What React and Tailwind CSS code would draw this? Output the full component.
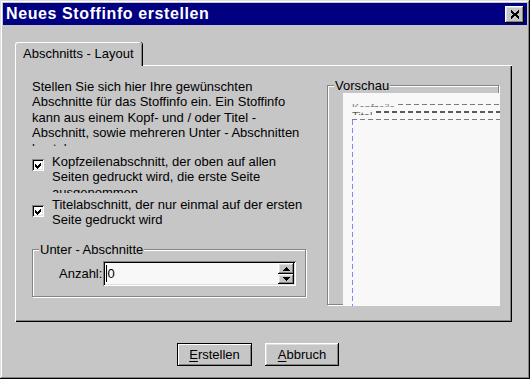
import React from "react";

const raised =
  "shadow-[inset_-1px_-1px_0_#000,inset_1px_1px_0_#fff,inset_-2px_-2px_0_#848484,inset_2px_2px_0_#dfdfdf]";
const sunken =
  "shadow-[inset_1px_1px_0_#848484,inset_-1px_-1px_0_#fff,inset_2px_2px_0_#000,inset_-2px_-2px_0_#dfdfdf]";
const etched = "border border-[#848484] shadow-[inset_1px_1px_0_#fff,1px_1px_0_#fff]";

function Checkbox({ className = "" }) {
  return (
    <div
      className={`flex h-[12px] w-[12px] shrink-0 items-center justify-center bg-white ${sunken} ${className}`}
    >
      <svg width="7" height="7" viewBox="0 0 7 7" shapeRendering="crispEdges">
        <polygon points="0,2 2,4 6,0 6,3 2,7 0,5" fill="#000" />
      </svg>
    </div>
  );
}

function Arrow({ up }) {
  return (
    <svg width="7" height="4" viewBox="0 0 7 4" shapeRendering="crispEdges">
      <polygon points={up ? "3.5,0 7,4 0,4" : "0,0 7,0 3.5,4"} fill="#000" />
    </svg>
  );
}

function GroupBox({ label, className, children }) {
  return (
    <div className={`relative ${etched} ${className}`}>
      <span className="absolute -top-[8px] left-[6px] bg-[#c6c6c6] px-[1px] leading-[15.4px]">
        {label}
      </span>
      {children}
    </div>
  );
}

export default function App() {
  return (
    <div className="font-['Liberation_Sans',Arial,sans-serif] text-[13px] text-black">
      <div className="flex h-[379px] w-[530px] flex-col bg-[#c6c6c6] p-[3px] shadow-[inset_-1px_-1px_0_#000,inset_1px_1px_0_#dfdfdf,inset_-2px_-2px_0_#848484,inset_2px_2px_0_#fff]">
        {/* title bar */}
        <div className="flex h-[22px] items-center justify-between bg-[#000080] pl-[3px] pr-[3px]">
          <span className="text-[16px] font-bold leading-none tracking-[0.6px] text-white">
            Neues Stoffinfo erstellen
          </span>
          <div className={`flex h-[17px] w-[19px] items-center justify-center bg-[#c6c6c6] ${raised}`}>
            <svg width="10" height="9" viewBox="0 0 10 9" shapeRendering="crispEdges">
              <path d="M1 1 L9 8 M9 1 L1 8" stroke="#000" strokeWidth="2" />
            </svg>
          </div>
        </div>

        <div className="px-[12px]">
          {/* tab */}
          <div className="relative z-10 -mb-[1px] mt-[17px] h-[24px] w-[127px] rounded-t-[3px] border-l border-t border-white bg-[#c6c6c6] pl-[7px] pt-[3px] leading-[15px] shadow-[inset_-1px_0_0_#848484,1px_0_0_#000]">
            Abschnitts - Layout
          </div>

          {/* panel */}
          <div className="flex h-[257px] w-[497px] bg-[#c6c6c6] pl-[17px] shadow-[inset_1px_1px_0_#fff,inset_-1px_-1px_0_#000,inset_-2px_-2px_0_#848484]">
            <div className="mt-[14px] w-[275px]">
              <p className="h-[67px] overflow-hidden leading-[15.4px]">
                Stellen Sie sich hier Ihre gewünschten Abschnitte für das Stoffinfo ein. Ein Stoffinfo
                kann aus einem Kopf- und / oder Titel - Abschnitt, sowie mehreren Unter - Abschnitten
                bestehen.
              </p>

              <div className="mt-[8px] flex h-[39px] overflow-hidden">
                <Checkbox className="mt-[5px]" />
                <p className="ml-[8px] w-[255px] leading-[15.4px]">
                  Kopfzeilenabschnitt, der oben auf allen Seiten gedruckt wird, die erste Seite
                  ausgenommen
                </p>
              </div>

              <div className="mt-[4px] flex h-[31px] overflow-hidden">
                <Checkbox className="mt-[8px]" />
                <p className="ml-[8px] w-[255px] leading-[15.4px]">
                  Titelabschnitt, der nur einmal auf der ersten Seite gedruckt wird
                </p>
              </div>

              <GroupBox label="Unter - Abschnitte" className="mt-[21px] h-[48px] w-[274px]">
                <div className="flex items-center pl-[26px] pt-[11px]">
                  <span className="leading-[15.4px]">Anzahl:</span>
                  <div className={`ml-[1px] flex h-[25px] w-[193px] items-center bg-[#f8f8f8] p-[2px] ${sunken}`}>
                    <span className="ml-[1px] border-l border-black leading-[17px]">0</span>
                    <div className="ml-auto flex h-full w-[16px] flex-col">
                      <div className={`flex h-[11px] items-center justify-center bg-[#c6c6c6] ${raised}`}>
                        <Arrow up />
                      </div>
                      <div className={`flex h-[10px] items-center justify-center bg-[#c6c6c6] ${raised}`}>
                        <Arrow />
                      </div>
                    </div>
                  </div>
                </div>
              </GroupBox>
            </div>

            {/* preview */}
            <GroupBox label="Vorschau" className="ml-[20px] mt-[20px] h-[220px] w-[172px]">
              <div className="ml-[15px] mt-[7px] flex h-[213px] w-[157px] flex-col bg-[#f8f8f8]">
                <div className="mt-[10px] flex h-[4px] items-start pl-[9px]">
                  <span className="h-[4px] overflow-hidden text-[10.5px] leading-[10px] text-[#7b7b7b]">
                    Kopfzeile
                  </span>
                  <div className="ml-[3px] mt-[1px] h-[1px] flex-1 bg-[repeating-linear-gradient(90deg,#7b7b7b_0_5px,transparent_5px_8px)]" />
                </div>
                <div className="mt-[4px] flex h-[4px] items-start pl-[9px]">
                  <span className="h-[4px] overflow-hidden text-[11px] leading-[10px] text-[#5a5a5a]">
                    Titel
                  </span>
                  <div className="ml-[4px] h-[2px] flex-1 bg-[repeating-linear-gradient(90deg,#5a5a5a_0_5px,transparent_5px_8px)]" />
                </div>
                <div className="ml-[9px] mt-[4px] h-[1px] bg-[repeating-linear-gradient(90deg,#7b7b7b_0_5px,transparent_5px_8px)]" />
                <div className="ml-[9px] w-[1px] flex-1 bg-[repeating-linear-gradient(180deg,#8484ff_0_5px,transparent_5px_8px)]" />
              </div>
            </GroupBox>
          </div>

          {/* buttons */}
          <div className="mt-[21px] flex gap-[13px] pl-[162px]">
            <button className="flex h-[23px] w-[75px] items-center justify-center border border-black bg-[#c6c6c6] shadow-[inset_1px_1px_0_#fff,inset_-1px_-1px_0_#848484]">
              <span>
                <span className="underline underline-offset-2">E</span>rstellen
              </span>
            </button>
            <button className={`flex h-[23px] w-[74px] items-center justify-center bg-[#c6c6c6] ${raised}`}>
              <span>
                <span className="underline underline-offset-2">A</span>bbruch
              </span>
            </button>
          </div>
        </div>
      </div>
    </div>
  );
}
